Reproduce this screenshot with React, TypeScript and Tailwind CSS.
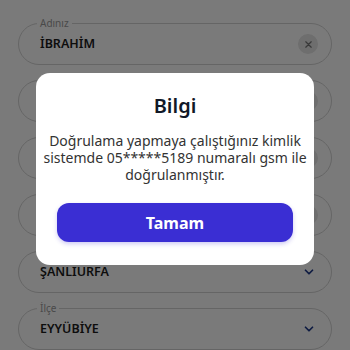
import React from "react";

const font = { fontFamily: '"Noto Sans", "Open Sans", sans-serif' };

function Chevron() {
  return (
    <svg width="14" height="14" viewBox="0 0 24 24" fill="none" stroke="#1e3a8a" strokeWidth="3" strokeLinecap="round" strokeLinejoin="round">
      <path d="M6 9l6 6 6-6" />
    </svg>
  );
}

function ClearIcon() {
  return (
    <div className="w-[20px] h-[20px] rounded-full bg-[#e5e5e5] flex items-center justify-center">
      <svg width="9" height="9" viewBox="0 0 10 10" stroke="#777" strokeWidth="1.4" strokeLinecap="round">
        <path d="M2 2l6 6M8 2l-6 6" />
      </svg>
    </div>
  );
}

function Field({ label, value, icon }: { label?: string; value?: string; icon?: "clear" | "chev" }) {
  return (
    <div className="relative h-[42px] rounded-full border border-[#d4d4d4] flex items-center justify-between pl-[21px] pr-[13px]">
      {label && (
        <span className="absolute left-[18px] -top-[8px] bg-white px-[3px] text-[10px] leading-[14px] text-[#9a9a9a]">{label}</span>
      )}
      <span className="text-[12.5px] font-semibold text-[#1c1c1c]">{value}</span>
      {icon === "clear" && <ClearIcon />}
      {icon === "chev" && <span className="pr-[2px]"><Chevron /></span>}
    </div>
  );
}

export default function App() {
  return (
    <div className="relative w-[350px] h-[350px] overflow-hidden bg-white" style={font}>
      <div className="flex flex-col gap-[15px] px-[18px] pt-[23px]">
        <Field label="Adınız" value="İBRAHİM" icon="clear" />
        <Field label="Soyadınız" value="" icon="clear" />
        <Field label="T.C. Kimlik No" value="" icon="clear" />
        <Field label="Doğum Tarihi" value="" icon="clear" />
        <Field label="İl" value="ŞANLIURFA" icon="chev" />
        <Field label="İlçe" value="EYYÜBİYE" icon="chev" />
      </div>
      <div className="absolute inset-0 bg-black/[0.52] flex justify-center pt-[73px]">
        <div className="w-[278px] h-[192px] bg-white rounded-[14px] flex flex-col items-center px-[21px] pt-[21px]">
          <div className="text-[20px] leading-[24px] font-semibold text-[#111827]">Bilgi</div>
          <p className="mt-[14px] text-[14px] leading-[17px] text-[#333] text-center whitespace-nowrap">
            Doğrulama yapmaya çalıştığınız kimlik
            <br />
            sistemde 05*****5189 numaralı gsm ile
            <br />
            doğrulanmıştır.
          </p>
          <button className="mt-[20px] w-full h-[39px] rounded-[12px] bg-[#3a2ed3] text-white text-[16px] font-bold shadow-[0_2px_4px_rgba(58,46,211,0.25)]">
            Tamam
          </button>
        </div>
      </div>
    </div>
  );
}
